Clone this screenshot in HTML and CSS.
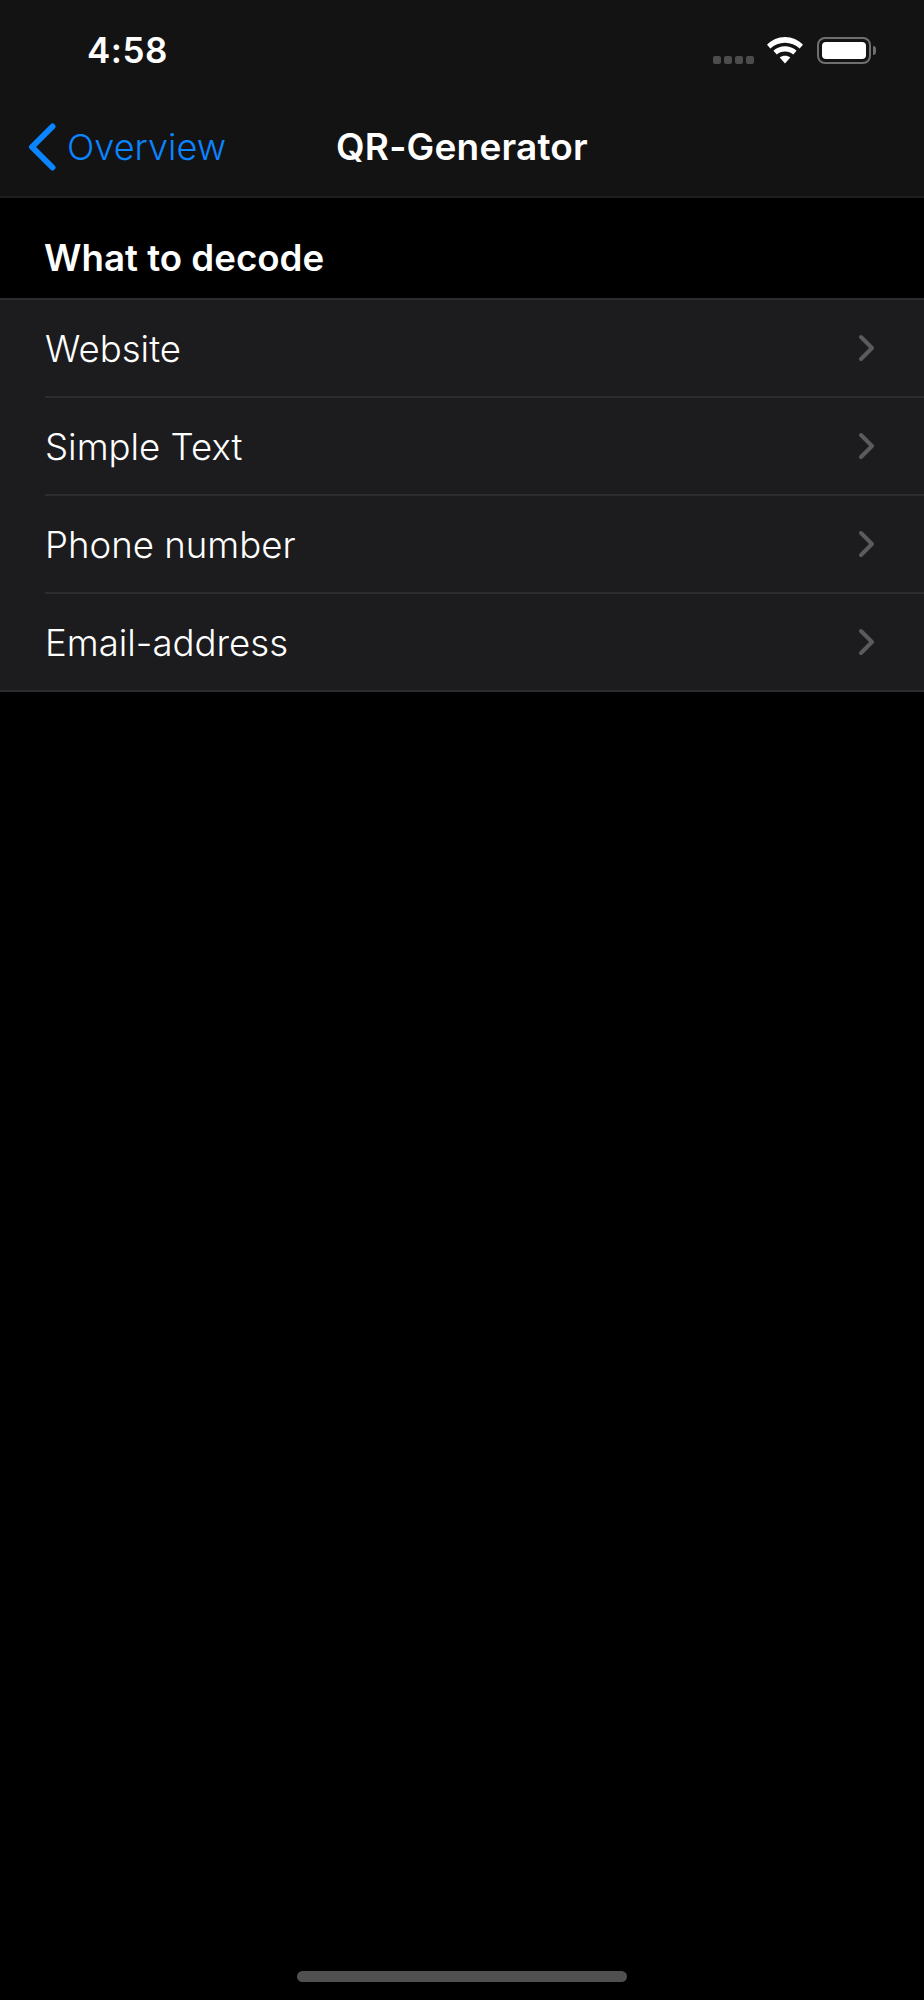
FILE: index.html
```
<!DOCTYPE html>
<html lang="en">
<head>
<meta charset="utf-8">
<title>QR-Generator</title>
<link rel="stylesheet" href="styles.css">
</head>
<body>
<div class="screen">
  <header class="top">
    <div class="status">
      <span class="time">4:58</span>
      <div class="status-icons">
        <div class="signal"><i></i><i></i><i></i><i></i></div>
        <svg class="wifi" width="36" height="27" viewBox="2 1 32 24"><path d="M18 6.200c5 0 9.500 1.900 13 5l3-3.400C29.800 3.600 24.200 1 18 1S6.200 3.600 2 7.800l3 3.400c3.500-3.100 8-5 13-5z" fill="#fff"/><path d="M18 13.800c2.900 0 5.400 1 7.300 2.700l3-3.300C25.500 10.700 21.900 9.200 18 9.200s-7.500 1.500-10.300 4l3 3.300c1.900-1.700 4.400-2.700 7.300-2.700z" fill="#fff"/><path d="M18 17.600c-1.800 0-3.400.6-4.700 1.700L18 24.500l4.700-5.200c-1.300-1.100-2.900-1.700-4.700-1.700z" fill="#fff"/></svg>
        <div class="battery"><div class="battery-body"><div class="battery-fill"></div></div><div class="battery-cap"></div></div>
      </div>
    </div>
    <nav class="nav">
      <a class="back">
        <svg class="back-chev" width="30" height="48" viewBox="0 0 30 48"><path d="M25.500 3.500 5 24l20.500 20.500" fill="none" stroke="#0a84ff" stroke-width="6" stroke-linecap="round" stroke-linejoin="round"/></svg>
        <span>Overview</span>
      </a>
      <h1 class="title">QR-Generator</h1>
    </nav>
  </header>
  <h2 class="section">What to decode</h2>
  <ul class="list">
    <li class="row"><div class="row-inner"><span class="label">Website</span><svg class="chev" width="18" height="28" viewBox="0 0 18 28"><path d="M3 3l11 11L3 25" fill="none" stroke="#5b5b5f" stroke-width="4" stroke-linecap="round" stroke-linejoin="round"/></svg></div></li>
    <li class="row"><div class="row-inner"><span class="label">Simple Text</span><svg class="chev" width="18" height="28" viewBox="0 0 18 28"><path d="M3 3l11 11L3 25" fill="none" stroke="#5b5b5f" stroke-width="4" stroke-linecap="round" stroke-linejoin="round"/></svg></div></li>
    <li class="row"><div class="row-inner"><span class="label">Phone number</span><svg class="chev" width="18" height="28" viewBox="0 0 18 28"><path d="M3 3l11 11L3 25" fill="none" stroke="#5b5b5f" stroke-width="4" stroke-linecap="round" stroke-linejoin="round"/></svg></div></li>
    <li class="row"><div class="row-inner"><span class="label">Email-address</span><svg class="chev" width="18" height="28" viewBox="0 0 18 28"><path d="M3 3l11 11L3 25" fill="none" stroke="#5b5b5f" stroke-width="4" stroke-linecap="round" stroke-linejoin="round"/></svg></div></li>
  </ul>
  <div class="home"></div>
</div>
</body>
</html>
```
FILE: styles.css
```
* { box-sizing: border-box; }
html, body { margin: 0; padding: 0; background: #000; }
body { font-family: Inter, "Liberation Sans", sans-serif; color: #fff; }
.screen { position: relative; width: 924px; height: 2000px; background: #000; overflow: hidden; }
.top { height: 198px; background: #131313; border-bottom: 2px solid #1f1f1f; }
.status { height: 98px; display: flex; justify-content: space-between; padding: 0 48px 0 87px; }
.time { font-size: 35px; font-weight: 600; line-height: 100px; letter-spacing: 0.5px; }
.status-icons { display: flex; align-items: flex-start; }
.signal { display: flex; gap: 3px; margin-top: 56px; margin-right: 13px; }
.signal i { width: 8px; height: 8px; border-radius: 2px; background: #4c4c4c; }
.wifi { margin-top: 37px; margin-right: 14px; }
.battery { display: flex; align-items: center; margin-top: 37px; height: 27px; }
.battery-body { width: 54px; height: 27px; border: 2px solid #6f6f6f; border-radius: 8px; padding: 3px; }
.battery-fill { height: 100%; background: #fff; border-radius: 4px; }
.battery-cap { width: 3px; height: 9px; margin-left: 2px; background: #6f6f6f; border-radius: 0 3px 3px 0; }
.nav { position: relative; height: 98px; display: flex; align-items: center; justify-content: center; }
.back { position: absolute; left: 27px; top: 25px; display: flex; align-items: center; color: #0a84ff; font-size: 36px; font-weight: 350; height: 48px; gap: 10px; }
.back-chev { flex: none; }
.title { margin: 0; font-size: 37px; font-weight: 600; letter-spacing: 0.2px; line-height: 48px; }
.section { margin: 0; height: 100px; padding: 0 0 0 44px; font-size: 36.7px; font-weight: 600; line-height: 120px; }
.list { list-style: none; margin: 0; padding: 0; background: #1c1c1e; border-top: 2px solid #2c2c2e; border-bottom: 2px solid #2c2c2e; }
.row { padding-left: 45px; }
.row-inner { height: 98px; display: flex; align-items: center; justify-content: space-between; padding-right: 48px; font-size: 36.6px; font-weight: 350; border-bottom: 2px solid #2c2c2e; }
.row:last-child .row-inner { border-bottom: 0; height: 96px; }
.label { padding-top: 2px; }
.home { position: absolute; left: 297px; bottom: 18px; width: 330px; height: 11px; border-radius: 6px; background: #505050; }
```
